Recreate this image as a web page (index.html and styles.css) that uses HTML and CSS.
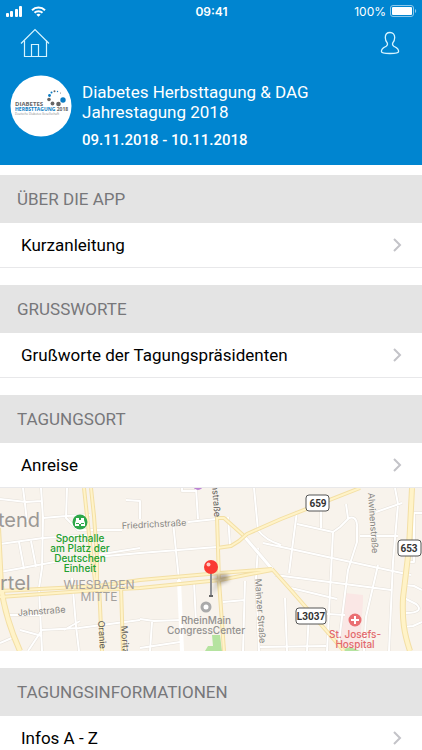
FILE: index.html
```html
<!DOCTYPE html>
<html lang="de">
<head>
  <meta charset="UTF-8">
  <meta name="viewport" content="width=device-width, initial-scale=1.0">
  <title>Diabetes Herbsttagung 2018</title>
  <link rel="stylesheet" href="styles.css">
</head>
<body>

  <header class="app-header">
    <div class="status-bar">
      <div class="status-left">
        <svg width="17" height="11" viewBox="0 0 17 11" fill="#fff" aria-hidden="true">
          <rect x="0" y="7" width="3" height="4" rx="1"/>
          <rect x="4" y="5" width="3" height="6" rx="1"/>
          <rect x="9" y="3" width="3" height="8" rx="1"/>
          <rect x="13" y="0" width="3" height="11" rx="1"/>
        </svg>
        <svg width="15" height="11" viewBox="0 0 15 11" fill="none" stroke="#fff" stroke-width="2" aria-hidden="true">
          <path d="M1 4.2a9.2 9.2 0 0 1 13 0"/>
          <path d="M3.5 6.8a5.7 5.7 0 0 1 8 0"/>
          <path d="M7.5 10.8L5.4 8.7a3 3 0 0 1 4.2 0z" fill="#fff" stroke="none"/>
        </svg>
      </div>
      <div class="status-time">09:41</div>
      <div class="status-right">
        <span>100%</span>
        <svg width="27" height="12" viewBox="0 0 27 12" aria-hidden="true">
          <rect x=".5" y=".5" width="23" height="11" rx="2.5" fill="none" stroke="#8cc8ec"/>
          <rect x="2" y="2" width="20" height="8" rx="1" fill="#fff"/>
          <path d="M25 4c1.6.6 1.6 3.4 0 4z" fill="#8cc8ec"/>
        </svg>
      </div>
    </div>

    <nav class="nav-bar">
      <a class="nav-icon" href="#" aria-label="Startseite">
        <svg width="30" height="30" viewBox="0 0 30 30" fill="none" stroke="#d6f4ff" stroke-width="1.2">
          <path d="M1 15.5L15 1.5l14 14"/>
          <path d="M4.5 12.5v16h22v-16"/>
          <path d="M11.5 28.5v-12h7v12"/>
        </svg>
      </a>
      <a class="nav-icon" href="#" aria-label="Profil">
        <svg width="20" height="24" viewBox="0 0 20 24" fill="none" stroke="#d6f4ff" stroke-width="1.3">
          <path d="M10 1.5c-3 0-4.7 2-4.7 5 0 2.700.8 4.300 2 5.500.5 1.600.2 2.500-1.200 3.300-2.300 1.200-4.700 1.900-4.700 5.200 0 1.500 3.600 2 8.600 2s8.600-.5 8.600-2c0-3.300-2.400-4-4.700-5.200-1.400-.8-1.700-1.700-1.200-3.300 1.200-1.200 2-2.800 2-5.500 0-3-1.700-5-4.700-5z"/>
        </svg>
      </a>
    </nav>

    <div class="event">
      <svg class="event-logo" viewBox="0 0 62 62" role="img" aria-label="Diabetes Herbsttagung 2018">
        <circle cx="31" cy="31" r="30.500" fill="#fff"/>
        <g fill="#0a7cc4">
          <circle cx="53" cy="25" r="2.700"/>
          <circle cx="39.500" cy="20.500" r="1.400"/>
          <circle cx="41.500" cy="17.500" r="1"/>
          <circle cx="47.500" cy="16.500" r=".7"/>
        </g>
        <g fill="#666">
          <circle cx="48.500" cy="29" r="2.300"/>
          <circle cx="42.500" cy="28.500" r="1.900"/>
          <circle cx="39" cy="24.500" r="1.800"/>
          <circle cx="44.500" cy="16.300" r="1"/>
          <circle cx="50.500" cy="18" r=".5"/>
        </g>
        <text class="logo-text" x="5" y="31" fill="#666">DIABETES</text>
        <text class="logo-name" x="5" y="36" fill="#0a7cc4">HERBSTTAGUNG <tspan fill="#666">2018</tspan></text>
        <text class="logo-small" x="5" y="40" fill="#888">Deutsche Diabetes Gesellschaft</text>
      </svg>
      <div class="event-text">
        <h1>Diabetes Herbsttagung &amp; DAG Jahrestagung 2018</h1>
        <p>09.11.2018 - 10.11.2018</p>
      </div>
    </div>
  </header>

  <main class="sections">
    <section>
      <h2>ÜBER DIE APP</h2>
      <a class="row" href="#">
        <span>Kurzanleitung</span>
        <svg class="chevron" viewBox="0 0 9 14"><path d="M1 1l6 6-6 6"/></svg>
      </a>
    </section>

    <section>
      <h2>GRUSSWORTE</h2>
      <a class="row" href="#">
        <span>Grußworte der Tagungspräsidenten</span>
        <svg class="chevron" viewBox="0 0 9 14"><path d="M1 1l6 6-6 6"/></svg>
      </a>
    </section>

    <section>
      <h2>TAGUNGSORT</h2>
      <a class="row" href="#">
        <span>Anreise</span>
        <svg class="chevron" viewBox="0 0 9 14"><path d="M1 1l6 6-6 6"/></svg>
      </a>
      <svg class="map" viewBox="0 0 422 163" preserveAspectRatio="xMidYMid slice" role="img" aria-label="Karte Wiesbaden Mitte">
        <defs>
          <filter id="soft" x="-50%" y="-50%" width="200%" height="200%"><feGaussianBlur stdDeviation="2"/></filter>
          <!-- minor streets -->
          <g id="streets">
            <path d="M0 11l26 3 15-1M23 0l2 16 2 18M41 0l2 30 -1 50-3 20 3 63M67 0l-1 30 12 12h18l26 0M43 30l23-2 24-1"/>
            <path d="M0 56l43-6 47-3M0 84l60-11 36-6 44-7M19 54l5 27M31 53l5 26"/>
            <path d="M126 12l14 1v18M72 90l4 48 3 25M9 127h33M42 142l37-2 61-8M42 142l-14 21M42 148l-22-6M64 142l16-9"/>
            <path d="M0 155l14-6M188 34l28-3M196 0l2 31M182 0v3l14 0"/>
            <path d="M96 69l44-4 77-6M173 34l6 58"/>
            <path d="M140 160l40-6M152 134l-2 29M140 131l14 2 27-1M194 94l2 40M223 114l22-2M245 93l-2 70"/>
            <path d="M228 29l2 28M254 0l4 42c5 7 13 12 23 15M258 60l-2 30 3 73M263 55l148 32"/>
            <path d="M297 23l-8 62M297 36l36 8 7-5 9-9c5-2 9 2 8 10v14l-9 28-9 71M321 23v17M346 16l2 14M333 44l-6 119"/>
            <path d="M275 87l116 15M291 100l46 11M378 77l-12 52-2 34M395 0l3 16-5 58-4 89M360 48h38M376 24l26-9"/>
            <path d="M422 25h-8v34M414 66v8h-8M404 97l10 1 8 4M404 110l12 6c6 5 3 9-10 9M403 139l10-1 9-4M260 159l66-1"/>
            <path d="M285 110l2 53M309 124l-2 39M327 126l18 1"/>
          </g>
          <!-- main roads -->
          <g id="roads">
            <path d="M84 0l3 28 4 36 5 35M91 0l3 28 3 42 0 30M99 98l1 20 2 45M121 98l2 65"/>
            <path d="M0 109l98-7 42-2 80-8 52-10M0 103l98-5 42-6 80-7 52-4"/>
            <path d="M217 29l2 64 5 70M217 30h7l19 17M217 60l14-2 8-5 8-7 34-15 79-31M272 81l18 20 54 62"/>
          </g>
          <path id="ring" d="M-2 40l3 58c3 25 10 45 19 65M412 0l-3 60-6 50c-1 22 1 35 7 53"/>
        </defs>

        <rect width="422" height="163" fill="#f8f3ec"/>
        <path d="M345 105l18 2v6l-3 45h-23z" fill="#fae7e5"/>
        <path d="M212 147h8l2 16h-17l3-5h5zM344 161l6-2 10 4h-16z" fill="#b5e3a0"/>
        <g fill="none" stroke-linejoin="round">
          <use href="#streets" stroke="#e6e1da" stroke-width="3"/>
          <use href="#streets" stroke="#fff" stroke-width="2"/>
          <path d="M179 92l3 71" stroke="#fff" stroke-width="4"/>
          <path d="M243 47l29 34" stroke="#e6e1da" stroke-width="4"/>
          <path d="M243 47l29 34" stroke="#fff" stroke-width="3"/>
          <use href="#roads" stroke="#f3dfa5" stroke-width="4"/>
          <use href="#ring" stroke="#f3dfa5" stroke-width="6"/>
          <use href="#roads" stroke="#fff3c8" stroke-width="2"/>
          <use href="#ring" stroke="#fff3c8" stroke-width="4"/>
        </g>

        <g class="district">
          <text x="-2" y="39">tend</text>
          <text x="0" y="102">rtel</text>
        </g>
        <g class="quarter">
          <text x="99" y="101">WIESBADEN</text>
          <text x="99" y="113">MITTE</text>
        </g>
        <g class="street">
          <text x="122" y="41" transform="rotate(-3 122 41)">Friedrichstraße</text>
          <text x="18" y="128" transform="rotate(-4 18 128)">Jahnstraße</text>
          <text x="368" y="5" transform="rotate(86 368 5)">Alwinenstraße</text>
          <text x="255" y="91" transform="rotate(86 255 91)">Mainzer Straße</text>
        </g>
        <g class="street street-dark">
          <text x="212" y="-3" transform="rotate(86 212 -3)">nstraße</text>
          <text x="98" y="133" transform="rotate(86 98 133)">Oranie</text>
          <text x="121" y="138" transform="rotate(86 121 138)">Moritz</text>
        </g>

        <circle cx="198" cy="-3" r="5" fill="#bd83d3"/>
        <circle cx="80" cy="34" r="7.500" fill="#2fa84a"/>
        <path d="M76 30h3v2h2v-2h3v2l1 3v3h-4v-2h-2v2h-4v-3l1-3z" fill="#fff"/>
        <path d="M76 35.500h3M81 35.500h3" stroke="#2fa84a"/>
        <g class="poi poi-green">
          <text x="80" y="54">Sporthalle</text>
          <text x="80" y="64">am Platz der</text>
          <text x="80" y="74">Deutschen</text>
          <text x="80" y="84">Einheit</text>
        </g>
        <circle cx="206" cy="119" r="4" fill="#fff" stroke="#aaa" stroke-width="3"/>
        <g class="poi poi-grey">
          <text x="206" y="136">RheinMain</text>
          <text x="206" y="146">CongressCenter</text>
        </g>
        <circle cx="355" cy="132" r="6.500" fill="#ea6f72"/>
        <path d="M355 128v8M351 132h8" stroke="#fff" stroke-width="2"/>
        <g class="poi poi-red">
          <text x="355" y="150">St. Josefs-</text>
          <text x="355" y="160">Hospital</text>
        </g>

        <g class="shield">
          <rect x="306" y="7" width="23" height="16" rx="3"/>
          <text x="318" y="19">659</text>
          <rect x="398" y="52" width="23" height="16" rx="3"/>
          <text x="409" y="64">653</text>
          <rect x="296" y="120" width="30" height="16" rx="3"/>
          <text x="311" y="132">L3037</text>
        </g>

        <!-- pin -->
        <path d="M211 107l6-14 9-6 3 3-8 5z" fill="#000" opacity=".2" filter="url(#soft)"/>
        <ellipse cx="221" cy="90" rx="8" ry="4" fill="#765" opacity=".5" filter="url(#soft)"/>
        <path d="M211 84v23" stroke="#8f9195" stroke-width="2"/>
        <path d="M209 108h4" stroke="#666" stroke-width="2"/>
        <circle cx="211" cy="79" r="7" fill="#fa3a32"/>
        <circle cx="208.500" cy="76.500" r="2" fill="#ffc9c4"/>
      </svg>
    </section>

    <section>
      <h2>TAGUNGSINFORMATIONEN</h2>
      <a class="row" href="#">
        <span>Infos A - Z</span>
        <svg class="chevron" viewBox="0 0 9 14"><path d="M1 1l6 6-6 6"/></svg>
      </a>
    </section>
  </main>

</body>
</html>
```

FILE: styles.css
```css
* {
  box-sizing: border-box;
}

body {
  margin: 0;
  font-family: Roboto, sans-serif;
  font-size: 17px;
  color: #000;
  background: #fff;
}

a {
  color: inherit;
  text-decoration: none;
}

svg {
  display: block;
}

.app-header {
  background: #0085d0;
  color: #fff;
}

/* Status bar */
.status-bar {
  display: grid;
  grid-template-columns: 1fr auto 1fr;
  align-items: center;
  height: 22px;
  padding: 0 5px 0 6px;
  font-family: Inter, sans-serif;
  font-size: 12px;
}

.status-left,
.status-right {
  display: flex;
  align-items: center;
  gap: 8px;
}

.status-right {
  justify-content: flex-end;
  gap: 4px;
}

.status-time {
  font-weight: 600;
}

/* Navigation */
.nav-bar {
  display: flex;
  justify-content: space-between;
  align-items: center;
  height: 42px;
  padding: 0 22px 0 20px;
}

/* Event */
.event {
  display: flex;
  align-items: flex-start;
  gap: 10px;
  padding: 11px 10px 15px;
}

.event-logo {
  flex: none;
  width: 62px;
  height: 62px;
}

.logo-text,
.logo-name,
.logo-small {
  font-family: "Open Sans", sans-serif;
  font-size: 6px;
  font-weight: 700;
}

.logo-name {
  font-size: 5px;
}

.logo-small {
  font-size: 3px;
  font-weight: 400;
}

.event-text {
  flex: 1;
  max-width: 260px;
  padding-top: 7px;
}

.event-text h1 {
  margin: 0;
  font-size: 17px;
  font-weight: 400;
  line-height: 20px;
}

.event-text p {
  margin: 8px 0 0;
  font-size: 15px;
  font-weight: 500;
  line-height: 20px;
}

/* Sections */
.sections {
  display: flex;
  flex-direction: column;
  gap: 17px;
  padding-top: 10px;
}

h2 {
  margin: 0;
  padding: 0 17px;
  font-size: 17px;
  font-weight: 400;
  line-height: 48px;
  color: #77777a;
  background: #e4e4e4;
}

.row {
  display: flex;
  align-items: center;
  justify-content: space-between;
  height: 45px;
  padding: 0 20px 1px 21px;
  border-bottom: 1px solid #e8e8ea;
}

.chevron {
  width: 9px;
  height: 14px;
  fill: none;
  stroke: #c3c3c8;
  stroke-width: 2;
}

/* Map */
.map {
  width: 100%;
  height: 163px;
  font-family: Inter, sans-serif;
}

.district {
  font-size: 20px;
  fill: #9b9895;
}

.quarter {
  font-size: 12px;
  fill: #a3a09d;
  text-anchor: middle;
}

.street {
  font-size: 9px;
  fill: #858380;
}

.street-dark {
  fill: #5a5856;
}

.poi {
  font-size: 10px;
  font-weight: 500;
  text-anchor: middle;
}

.poi-green {
  fill: #22a02f;
}

.poi-grey {
  fill: #93918f;
}

.poi-red {
  fill: #e2686b;
}

.shield rect {
  fill: #fff;
  stroke: #555;
}

.shield text {
  font-family: Roboto, sans-serif;
  font-size: 10px;
  font-weight: 700;
  fill: #333;
  text-anchor: middle;
}
```
